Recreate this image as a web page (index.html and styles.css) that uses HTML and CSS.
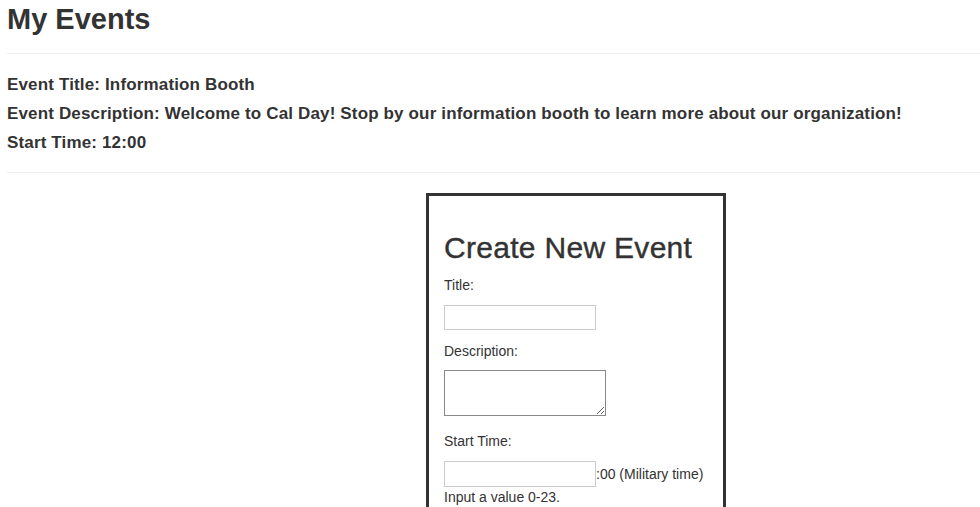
FILE: index.html
```html
<!DOCTYPE html>
<html>
<head>
<meta charset="utf-8">
<link rel="stylesheet" href="styles.css">
</head>
<body>
<div class="page">
  <h1 class="title">My Events</h1>
  <hr class="rule">
  <div class="event">
    <div class="event-line">Event Title: Information Booth</div>
    <div class="event-line">Event Description: Welcome to Cal Day! Stop by our information booth to learn more about our organization!</div>
    <div class="event-line">Start Time: 12:00</div>
  </div>
  <hr class="rule rule-bottom">
  <div class="form-box">
    <h2 class="form-title">Create New Event</h2>
    <label class="field-label label-title">Title:</label>
    <input class="text-input" type="text">
    <label class="field-label label-desc">Description:</label>
    <textarea class="text-area"></textarea>
    <label class="field-label label-time">Start Time:</label>
    <div class="time-row">
      <input class="text-input time-input" type="text"><span class="time-suffix">:00 (Military time)</span>
    </div>
    <div class="hint">Input a value 0-23.</div>
  </div>
</div>
</body>
</html>
```
FILE: styles.css
```css
html, body {
  margin: 0;
  padding: 0;
  background: #fff;
}
body {
  font-family: "Liberation Sans", Arial, sans-serif;
  font-size: 14px;
  color: #333;
}
.page {
  padding-left: 7px;
}
.title {
  margin: 3px 0 0 0;
  font-size: 29px;
  line-height: 32px;
  font-weight: bold;
}
.rule {
  border: 0;
  border-top: 1px solid #eee;
  margin: 18px 0 0 0;
  height: 0;
}
.event {
  margin-top: 16px;
}
.event-line {
  font-size: 17px;
  line-height: 29px;
  font-weight: bold;
  letter-spacing: 0.15px;
}
.rule-bottom {
  margin-top: 15px;
}
.form-box {
  margin: 20px 0 0 419px;
  width: 264px;
  border: 3px solid #333;
  padding: 15px 15px 30px 15px;
  display: flex;
  flex-direction: column;
  align-items: flex-start;
}
.form-title {
  margin: 20px 0 0 0;
  font-size: 30px;
  line-height: 33px;
  font-weight: normal;
  letter-spacing: 0.3px;
  -webkit-text-stroke: 0.4px #333;
}
.field-label {
  display: block;
  line-height: 20px;
  margin-top: 10px;
}
.label-title {
  margin-top: 11px;
}
.label-desc {
  margin-top: 11px;
}
.text-input {
  box-sizing: border-box;
  width: 152px;
  height: 25px;
  margin: 10px 0 0 0;
  padding: 2px 4px;
  border: 1px solid #ccc;
  border-radius: 0;
  font-family: inherit;
  font-size: 14px;
  outline: none;
}
.text-area {
  box-sizing: border-box;
  width: 162px;
  height: 46px;
  margin: 9px 0 0 0;
  padding: 2px;
  border: 1px solid #888;
  border-radius: 0;
  font-family: inherit;
  font-size: 14px;
  display: block;
}
.label-time {
  margin-top: 15px;
}
.time-row {
  display: flex;
  align-items: baseline;
  margin-top: 10px;
}
.time-input {
  height: 26px;
  margin: 0;
}
.time-suffix {
  line-height: 20px;
}
.hint {
  line-height: 20px;
  margin-top: 0;
}
```
